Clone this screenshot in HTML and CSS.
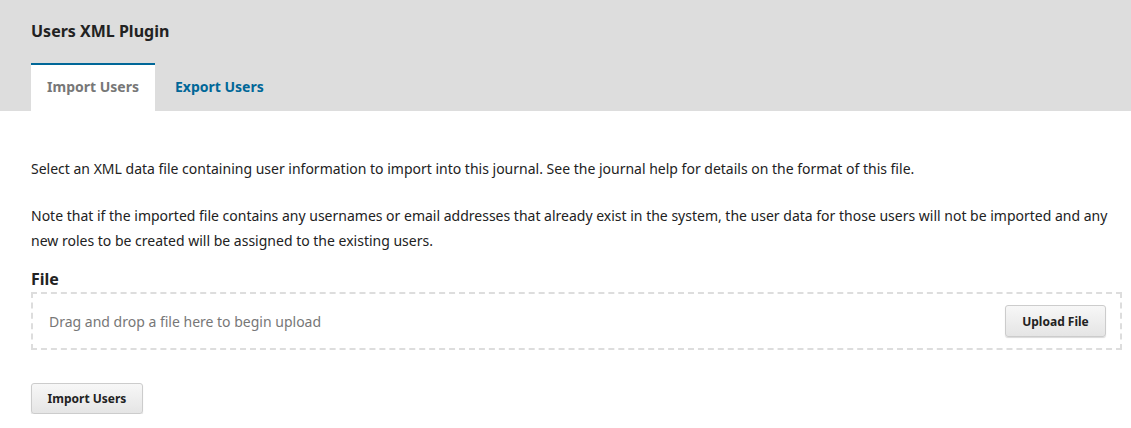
FILE: index.html
```html
<!DOCTYPE html>
<html>
<head>
<meta charset="utf-8">
<link rel="stylesheet" href="styles.css">
</head>
<body>
<div class="header">
  <h1 class="title">Users XML Plugin</h1>
  <div class="tabs">
    <div class="tab active">Import Users</div>
    <div class="tab">Export Users</div>
  </div>
</div>
<div class="content">
  <p class="para first">Select an XML data file containing user information to import into this journal. See the journal help for details on the format of this file.</p>
  <p class="para">Note that if the imported file contains any usernames or email addresses that already exist in the system, the user data for those users will not be imported and any new roles to be created will be assigned to the existing users.</p>
  <div class="label">File</div>
  <div class="dropzone">
    <span class="droptext">Drag and drop a file here to begin upload</span>
    <button class="btn">Upload File</button>
  </div>
  <button class="btn import">Import Users</button>
</div>
</body>
</html>
```
FILE: styles.css
```css
html, body { margin: 0; padding: 0; background: #fff; }
body { font-family: "Noto Sans", sans-serif; color: #222; }
.header { background: #ddd; height: 111px; padding: 0 31px; box-sizing: border-box; display: flex; flex-direction: column; }
.title { margin: 0; padding-top: 19px; font-size: 16px; font-weight: 700; line-height: 24px; color: #222; }
.tabs { display: flex; margin-top: 20px; height: 48px; }
.tab { font-size: 14px; font-weight: 700; color: #006798; padding: 0 20px; line-height: 44px; border-top: 2px solid transparent; }
.tab.active { background: #fff; color: #777; border-top-color: #006798; width: 124px; box-sizing: border-box; text-align: center; padding: 0; }
.content { padding: 0 9px 0 31px; }
.para { margin: 0; font-size: 14px; line-height: 25px; }
.para.first { margin-top: 45px; margin-bottom: 22px; }
.label { font-size: 16px; font-weight: 700; margin-top: 14px; line-height: 24px; }
.dropzone { border: 2px dashed #ddd; height: 58px; box-sizing: border-box; display: flex; align-items: center; justify-content: space-between; padding: 0 14px 0 16px; margin-top: 1px; }
.droptext { font-size: 14px; color: #777; }
.btn { font-family: "Noto Sans", sans-serif; font-size: 12px; font-weight: 700; color: #222; background: linear-gradient(#f7f7f7, #e5e5e5); border: 1px solid #ccc; border-radius: 3px; box-shadow: 0 1px 1px rgba(0,0,0,0.15); height: 32px; width: 101px; padding: 0; }
.btn.import { margin-top: 33px; height: 31px; width: 112px; }
```
